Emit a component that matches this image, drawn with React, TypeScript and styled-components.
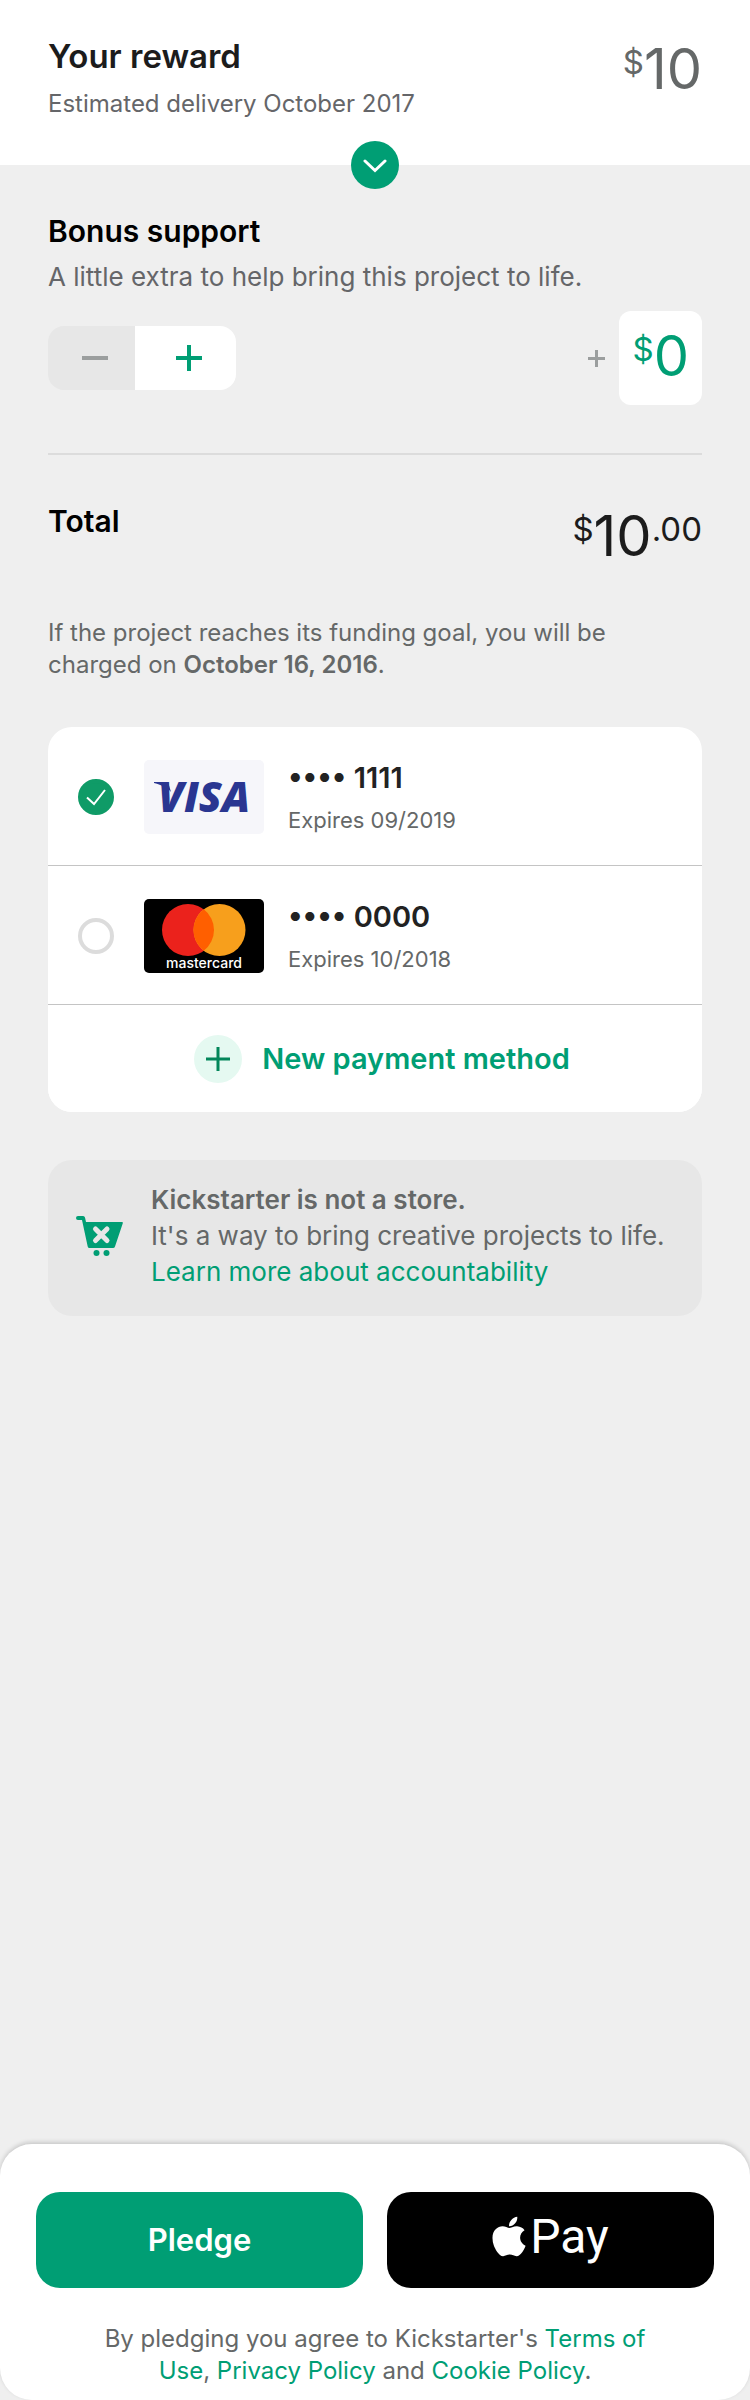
import { useState } from "react";
import styled, { createGlobalStyle } from "styled-components";
import { FaApple } from "react-icons/fa";

const color = {
  green: "#009e74",
  deepGreen: "#0f9b67",
  mint: "#e5f9f1",
  page: "#efefef",
  notice: "#e7e7e7",
  rule: "#dcdcdc",
  cardRule: "#c4c4c4",
  ink: "#1c1c1c",
  black: "#000000",
  grey: "#656868",
  coolGrey: "#656669",
  mute: "#9b9e9e",
  white: "#ffffff",
};

const GlobalStyle = createGlobalStyle`
  *, *::before, *::after { box-sizing: border-box; }
  body {
    margin: 0;
    background: ${color.page};
    font-family: Inter, "Liberation Sans", sans-serif;
    -webkit-font-smoothing: antialiased;
  }
  h1, h2, p { margin: 0; }
  button {
    margin: 0;
    padding: 0;
    border: 0;
    font: inherit;
    cursor: pointer;
  }
  svg { display: block; }
`;

const Page = styled.div`
  display: flex;
  flex-direction: column;
  min-height: 100vh;
`;

const Header = styled.header`
  position: relative;
  display: flex;
  align-items: flex-start;
  justify-content: space-between;
  padding: 36px 48px 45px;
  background: ${color.white};
`;

const RewardTitle = styled.h1`
  color: ${color.ink};
  font-size: 33px;
  font-weight: 600;
  line-height: 40px;
`;

const Delivery = styled.p`
  margin-top: 12px;
  color: ${color.coolGrey};
  font-size: 24px;
  line-height: 32px;
`;

const ExpandButton = styled.button`
  position: absolute;
  bottom: -24px;
  left: 50%;
  display: grid;
  place-items: center;
  width: 48px;
  height: 48px;
  border-radius: 50%;
  background: ${color.green};
  transform: translateX(-50%);
`;

const Money = styled.div<{ $tone: string }>`
  display: flex;
  align-items: flex-start;
  color: ${({ $tone }) => $tone};
`;

const MoneySmall = styled.span`
  font-size: 33px;
  line-height: 42px;
`;

const MoneyLarge = styled.span`
  font-size: 56px;
  line-height: 56px;
`;

const HeaderMoney = styled(Money)`
  padding-top: 5px;
`;

const Main = styled.main`
  display: flex;
  flex-direction: column;
  padding: 48px 48px 0;
`;

const SectionTitle = styled.h2`
  color: ${color.black};
  font-size: 30px;
  font-weight: 600;
  line-height: 36px;
`;

const SectionText = styled.p`
  margin-top: 12px;
  color: ${color.coolGrey};
  font-size: 26px;
  line-height: 32px;
`;

const BonusRow = styled.div`
  display: flex;
  align-items: center;
  justify-content: space-between;
  margin-top: 18px;
  padding-bottom: 48px;
  border-bottom: 2px solid ${color.rule};
`;

const Stepper = styled.div`
  display: flex;
  height: 64px;
  overflow: hidden;
  border-radius: 16px;
`;

const StepButton = styled.button<{ $active?: boolean }>`
  display: grid;
  place-items: center;
  width: ${({ $active }) => ($active ? 101 : 87)}px;
  padding-left: 6px;
  background: ${({ $active }) => ($active ? color.white : color.notice)};
  color: ${({ $active }) => ($active ? color.green : color.mute)};
`;

const BonusAmount = styled.div`
  display: flex;
  align-items: center;
  gap: 14px;
  color: ${color.mute};
`;

const AmountBox = styled.output`
  padding: 17px 13px 21px;
  border-radius: 12px;
  background: ${color.white};
`;

const TotalRow = styled.div`
  display: flex;
  align-items: flex-start;
  justify-content: space-between;
  padding-top: 48px;
`;

const ChargeNote = styled.p`
  margin-top: 53px;
  color: ${color.grey};
  font-size: 24px;
  line-height: 32px;

  strong { font-weight: 600; }
`;

const Methods = styled.div`
  margin-top: 46px;
  overflow: hidden;
  border-radius: 24px;
  background: ${color.white};
`;

const MethodRow = styled.label`
  display: flex;
  align-items: center;
  padding: 33px 30px 31px;
  border-bottom: 1px solid ${color.cardRule};
  cursor: pointer;
`;

const RadioCell = styled.span`
  display: grid;
  width: 36px;
  height: 36px;
  margin-right: 30px;

  > * { grid-area: 1 / 1; }
`;

const Radio = styled.input`
  appearance: none;
  width: 36px;
  height: 36px;
  margin: 0;
  border: 4px solid ${color.rule};
  border-radius: 50%;
  background: ${color.white};

  &:checked {
    border-color: ${color.deepGreen};
    background: ${color.deepGreen};
  }

  & + svg { visibility: hidden; pointer-events: none; z-index: 1; }
  &:checked + svg { visibility: visible; }
`;

const MethodText = styled.span`
  display: flex;
  flex-direction: column;
  gap: 10px;
  margin-left: 24px;
`;

const CardNumber = styled.span`
  color: #222222;
  font-size: 29px;
  font-weight: 600;
  line-height: 36px;
`;

const CardExpiry = styled.span`
  color: ${color.grey};
  font-size: 22px;
  line-height: 28px;
`;

const NewMethod = styled.button`
  display: flex;
  align-items: center;
  justify-content: center;
  gap: 20px;
  width: 100%;
  height: 107px;
  padding-left: 14px;
  background: ${color.white};
  color: ${color.green};
  font-size: 29px;
  font-weight: 600;
  line-height: 36px;
`;

const PlusBadge = styled.span`
  display: grid;
  place-items: center;
  width: 48px;
  height: 48px;
  border-radius: 50%;
  background: ${color.mint};
  color: #03865a;
`;

const Notice = styled.aside`
  display: flex;
  align-items: center;
  gap: 27px;
  margin: 48px 0;
  padding: 22px 28px 26px;
  border-radius: 24px;
  background: ${color.notice};
`;

const NoticeText = styled.p`
  color: ${color.grey};
  font-size: 26px;
  line-height: 36px;

  strong { display: block; font-weight: 600; }
`;

const Link = styled.a`
  color: ${color.green};
  text-decoration: none;
`;

const Footer = styled.footer`
  margin-top: auto;
  padding: 48px 36px 13px;
  border-radius: 32px;
  background: ${color.white};
  box-shadow: 0 -2px 4px rgba(0, 0, 0, 0.16);
`;

const Actions = styled.div`
  display: grid;
  grid-template-columns: 1fr 1fr;
  gap: 24px;
`;

const ActionButton = styled.button`
  display: flex;
  align-items: center;
  justify-content: center;
  height: 96px;
  border-radius: 24px;
  background: ${color.green};
  color: ${color.white};
  font-size: 31px;
  font-weight: 600;
  line-height: 40px;
`;

const ApplePayButton = styled(ActionButton)`
  padding-bottom: 7px;
  background: ${color.black};
`;

const AppleMark = styled(FaApple)`
  width: 34px;
  height: 45px;
`;

const PayWord = styled.span`
  padding-left: 4px;
  font-family: Roboto, "Liberation Sans", sans-serif;
  font-size: 48px;
  font-weight: 400;
  line-height: 56px;
`;

const Terms = styled.p`
  max-width: 560px;
  margin: 35px auto 0;
  color: ${color.grey};
  font-size: 24px;
  line-height: 32px;
  text-align: center;
`;

function Sign({ size, stroke, minus }: { size: number; stroke: number; minus?: boolean }) {
  const mid = size / 2;
  return (
    <svg width={size} height={size} stroke="currentColor" strokeWidth={stroke} aria-hidden="true">
      <path d={`M0 ${mid}H${size}`} />
      {!minus && <path d={`M${mid} 0V${size}`} />}
    </svg>
  );
}

function VisaLogo() {
  return (
    <svg width="120" height="74" viewBox="0 0 120 74" role="img" aria-label="Visa">
      <rect width="120" height="74" rx="5" fill="#f6f6fa" />
      <path d="M10 22h14l3 10c-3-4-9-7-17-9z" fill="#2a3691" />
      <text
        x="14"
        y="52"
        fill="#2a3691"
        fontFamily="'Open Sans', sans-serif"
        fontSize="42"
        fontStyle="italic"
        fontWeight="800"
      >
        VISA
      </text>
    </svg>
  );
}

function MastercardLogo() {
  return (
    <svg width="120" height="74" viewBox="0 0 120 74" role="img" aria-label="Mastercard">
      <rect width="120" height="74" rx="5" fill="#000000" />
      <circle cx="44" cy="31" r="26" fill="#eb221c" />
      <circle cx="75.500" cy="31" r="26" fill="#f79f1c" />
      <path d="M59.750 10.300a26 26 0 0 1 0 41.400a26 26 0 0 1 0-41.400z" fill="#ff5f00" />
      <text
        x="60"
        y="69"
        fill="#ffffff"
        fontFamily="Inter, sans-serif"
        fontSize="14"
        fontWeight="500"
        textAnchor="middle"
      >
        mastercard
      </text>
    </svg>
  );
}

function CartIcon() {
  return (
    <svg width="48" height="42" viewBox="0 0 48 42" aria-hidden="true">
      <path
        d="M2 1h5a2 2 0 0 1 2 1.500L10 7H46q1.200 0 .8 1.300L39 31.500Q38.500 33 37 33H13.500Q12 33 11.700 31.500L6 5H2a2 2 0 0 1 0-4z"
        fill={color.green}
      />
      <path
        d="M19.500 14L31 25.500M31 14L19.500 25.500"
        stroke={color.notice}
        strokeWidth="5"
        strokeLinecap="round"
      />
      <circle cx="20.500" cy="38" r="3" fill={color.green} />
      <circle cx="30.500" cy="38" r="3" fill={color.green} />
    </svg>
  );
}

const methods = [
  { id: "visa", last4: "1111", expires: "09/2019", Logo: VisaLogo },
  { id: "mastercard", last4: "0000", expires: "10/2018", Logo: MastercardLogo },
];

const REWARD = 10;

export default function App() {
  const [bonus, setBonus] = useState(0);
  const [method, setMethod] = useState("visa");

  return (
    <Page>
      <GlobalStyle />
      <Header>
        <div>
          <RewardTitle>Your reward</RewardTitle>
          <Delivery>Estimated delivery October 2017</Delivery>
        </div>
        <HeaderMoney $tone={color.grey}>
          <MoneySmall>$</MoneySmall>
          <MoneyLarge>{REWARD}</MoneyLarge>
        </HeaderMoney>
        <ExpandButton type="button" aria-label="Show reward details">
          <svg width="24" height="24" viewBox="0 0 24 24" fill="none" aria-hidden="true">
            <path d="M2 8l10 9.500L22 8" stroke={color.white} strokeWidth="3" strokeLinecap="round" />
          </svg>
        </ExpandButton>
      </Header>

      <Main>
        <SectionTitle>Bonus support</SectionTitle>
        <SectionText>A little extra to help bring this project to life.</SectionText>
        <BonusRow>
          <Stepper>
            <StepButton type="button" aria-label="Decrease bonus" onClick={() => setBonus(Math.max(0, bonus - 1))}>
              <Sign size={26} stroke={4} minus />
            </StepButton>
            <StepButton type="button" $active aria-label="Increase bonus" onClick={() => setBonus(bonus + 1)}>
              <Sign size={26} stroke={4} />
            </StepButton>
          </Stepper>
          <BonusAmount>
            <Sign size={17} stroke={3} />
            <AmountBox>
              <Money $tone={color.green}>
                <MoneySmall>$</MoneySmall>
                <MoneyLarge>{bonus}</MoneyLarge>
              </Money>
            </AmountBox>
          </BonusAmount>
        </BonusRow>

        <TotalRow>
          <SectionTitle>Total</SectionTitle>
          <HeaderMoney $tone={color.ink}>
            <MoneySmall>$</MoneySmall>
            <MoneyLarge>{REWARD + bonus}</MoneyLarge>
            <MoneySmall>.00</MoneySmall>
          </HeaderMoney>
        </TotalRow>

        <ChargeNote>
          If the project reaches its funding goal, you will be charged on <strong>October 16, 2016</strong>.
        </ChargeNote>

        <Methods role="radiogroup" aria-label="Payment method">
          {methods.map(({ id, last4, expires, Logo }) => (
            <MethodRow key={id}>
              <RadioCell>
                <Radio
                  type="radio"
                  name="method"
                  value={id}
                  checked={method === id}
                  onChange={() => setMethod(id)}
                />
                <svg width="36" height="36" viewBox="0 0 36 36" fill="none" aria-hidden="true">
                  <path d="M9 18.500l7 6.500L27 11" stroke={color.white} strokeWidth="2" />
                </svg>
              </RadioCell>
              <Logo />
              <MethodText>
                <CardNumber>•••• {last4}</CardNumber>
                <CardExpiry>Expires {expires}</CardExpiry>
              </MethodText>
            </MethodRow>
          ))}
          <NewMethod type="button">
            <PlusBadge>
              <Sign size={24} stroke={3} />
            </PlusBadge>
            New payment method
          </NewMethod>
        </Methods>

        <Notice>
          <CartIcon />
          <NoticeText>
            <strong>Kickstarter is not a store.</strong>
            It's a way to bring creative projects to life.
            <br />
            <Link href="#accountability">Learn more about accountability</Link>
          </NoticeText>
        </Notice>
      </Main>

      <Footer>
        <Actions>
          <ActionButton type="button">Pledge</ActionButton>
          <ApplePayButton type="button" aria-label="Apple Pay">
            <AppleMark aria-hidden="true" />
            <PayWord>Pay</PayWord>
          </ApplePayButton>
        </Actions>
        <Terms>
          By pledging you agree to Kickstarter's <Link href="#terms">Terms of Use</Link>,{" "}
          <Link href="#privacy">Privacy Policy</Link> and <Link href="#cookies">Cookie Policy</Link>.
        </Terms>
      </Footer>
    </Page>
  );
}
